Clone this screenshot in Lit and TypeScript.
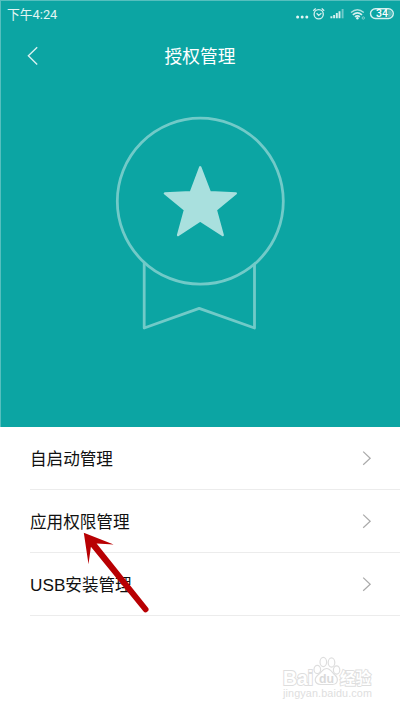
import { LitElement, html, css, svg } from "lit";
import { customElement } from "lit/decorators.js";

const ITEMS = [
  { latin: "", text: "自启动管理" },
  { latin: "", text: "应用权限管理" },
  { latin: "USB", text: "安装管理" },
];

@customElement("status-bar")
export class StatusBar extends LitElement {
  static styles = css`
    :host { display: flex; height: 28px; padding: 0 6px 0 7px; box-sizing: border-box; align-items: center; justify-content: space-between; color: #e2f5f4; }
    .time { font-size: 12.8px; line-height: 28px; padding-top: 1px; white-space: nowrap; }
    .icons { display: block; flex: none; }
    .level { font: 500 10.5px Roboto, "Noto Sans", sans-serif; }
  `;
  render() {
    return html`
      <span class="time">下午4:24</span>
      <svg class="icons" width="100" height="28" viewBox="294 0 100 28" fill="none" stroke="#d6f0ef">
        <g fill="#e2f5f4" stroke="none">
          <circle cx="297.6" cy="17" r="1.5" /><circle cx="302.2" cy="17" r="1.5" /><circle cx="306.8" cy="17" r="1.5" />
        </g>
        <circle cx="318.7" cy="14.3" r="4.6" stroke-width="1.3" />
        <path d="M313.2 10.8l2.5-2.2M324.2 10.8l-2.500-2.200M316.6 13.2l2.1 2.2 2.7-2.2" stroke-width="1.3" />
        <g stroke-width="1.9">
          <path d="M331.4 18.3v-2M334.1 18.3v-3.4M336.8 18.3v-5.2M339.5 18.3v-7" />
          <path d="M342.6 18.3v-9.3" opacity=".5" />
        </g>
        <path d="M351 12.500q6.400-5.400 12.800 0" stroke-width="1.4" opacity=".8" />
        <path d="M352.800 14.800q4.600-3.700 9.200 0M354.900 16.800q2.500-1.900 5 0" stroke-width="1.6" />
        <circle cx="357.4" cy="18.2" r="1.2" fill="#e2f5f4" stroke="none" />
        <circle cx="363.3" cy="18" r="1.2" stroke-width=".9" opacity=".6" />
        <rect x="370.5" y="8.7" width="22.8" height="9.8" rx="4.9" stroke-width="1.4" />
        <path d="M388.2 10.3h.6a3.3 3.3 0 0 1 0 6.6h-.6z" fill="#55bcbb" stroke="none" />
        <text class="level" x="376" y="17.4" fill="#fff" stroke="none">34</text>
      </svg>
    `;
  }
}

@customElement("title-bar")
export class TitleBar extends LitElement {
  static styles = css`
    :host { display: grid; grid-template-columns: 64px 1fr 64px; height: 56px; align-items: center; color: #fff; }
    .back { display: block; }
    .title { text-align: center; font-size: 17.7px; line-height: 26px; padding-top: 2px; }
  `;
  render() {
    return html`
      <svg class="back" width="64" height="56" fill="none" stroke="#d9f1f0" stroke-width="1.4">
        <path d="M37.2 19.2l-8.8 8.6 8.8 8.6" />
      </svg>
      <span class="title">授权管理</span>
    `;
  }
}

@customElement("award-badge")
export class AwardBadge extends LitElement {
  static styles = css`
    :host { display: flex; justify-content: center; padding-top: 21px; }
  `;
  render() {
    const star = svg`<path d="M200.2 167.3L209.8 192.3L235.8 193.4L215.8 209.7L222.7 235L200.2 220.6L178.1 235L185 209.7L164.9 193.4L190.8 192.3Z" />`;
    return html`
      <svg width="200" height="235" viewBox="100 105 200 235" fill="none" stroke-linejoin="round">
        <g stroke="#71cac8" stroke-width="2.8">
          <circle cx="200.3" cy="201.2" r="83" />
          <path d="M144.2 262.7V328L199.2 308.4L254.5 328V264" />
        </g>
        <g fill="#a9e0de" stroke="#a9e0de" stroke-width="2.4">${star}</g>
      </svg>
    `;
  }
}

@customElement("menu-row")
export class MenuRow extends LitElement {
  static properties = { latin: {}, text: {} };
  declare latin: string;
  declare text: string;
  static styles = css`
    :host { display: flex; height: 63px; box-sizing: border-box; margin-left: 30px; padding-right: 28px; border-bottom: 1px solid #ececec; align-items: center; justify-content: space-between; color: #111; font-size: 16.6px; line-height: 24px; }
    .label { padding-top: 3px; }
    .latin { font-family: "Liberation Sans", sans-serif; font-size: 17.2px; line-height: 1; }
    .chevron { display: block; }
  `;
  render() {
    return html`
      <span class="label">${this.latin ? html`<span class="latin">${this.latin}</span>` : ""}${this.text}</span>
      <svg class="chevron" width="10" height="16" fill="none" stroke="#aaa" stroke-width="1.2">
        <path d="M1.2 1.6l7 6.6-7 6.6" />
      </svg>
    `;
  }
}

@customElement("app-root")
export class AppRoot extends LitElement {
  static styles = css`
    :host { display: block; position: relative; width: 400px; height: 711px; overflow: hidden; background: #fff; font-family: Roboto, "Noto Sans CJK SC", sans-serif; }
    .hero { height: 427px; background: #0ca5a3; box-shadow: inset 1px 1px #55bfbe; }
    .arrow { position: absolute; left: 75px; top: 525px; }
    .watermark { position: absolute; left: 276px; top: 650px; }
    .brand { font: bold 20px "Liberation Sans", sans-serif; }
    .cjk { font: bold 15.5px "Noto Sans CJK SC", sans-serif; }
    .du { font: bold 12.5px "Liberation Sans", sans-serif; }
    .site { font: 10.8px "Liberation Sans", sans-serif; }
  `;
  render() {
    return html`
      <div class="hero">
        <status-bar></status-bar>
        <title-bar></title-bar>
        <award-badge></award-badge>
      </div>
      ${ITEMS.map((item) => html`<menu-row .latin=${item.latin} .text=${item.text}></menu-row>`)}
      <svg class="arrow" width="80" height="90" viewBox="75 525 80 90">
        <path d="M83.8 532.7L113.7 544.5L96.6 543.4L147.8 607.5A2.9 2.9 0 0 1 143.4 611.3L90.9 546.8L88.5 564.2Z" fill="#b80003" />
      </svg>
      <svg class="watermark" width="104" height="55" viewBox="276 650 104 55" fill="#fff" stroke="#dedede" stroke-width="1.2">
        <text class="brand" x="283" y="684.5" textLength="30" lengthAdjust="spacingAndGlyphs" stroke-width="2" paint-order="stroke">Bai</text>
        <ellipse cx="317.3" cy="669.5" rx="3.3" ry="4.2" /><ellipse cx="323.3" cy="662" rx="3.3" ry="4.6" />
        <ellipse cx="331.5" cy="662.5" rx="3.3" ry="4.6" /><ellipse cx="336.6" cy="670" rx="3.2" ry="4.2" />
        <path d="M326.500 668.500c4 0 5.500 4 8.500 6.500s4 9-2.500 9.500h-12c-6.500-.5-6.500-6.500-2.500-9.500s4.500-6.500 8.500-6.500z" />
        <text class="du" x="319" y="683" textLength="15" lengthAdjust="spacingAndGlyphs" fill="#dadada" stroke="none">du</text>
        <text class="cjk" x="340" y="684" textLength="31" stroke-width="1.8" paint-order="stroke">经验</text>
        <text class="site" x="283" y="696.500" textLength="89" fill="#dedede" stroke="none">jingyan.baidu.com</text>
      </svg>
    `;
  }
}
